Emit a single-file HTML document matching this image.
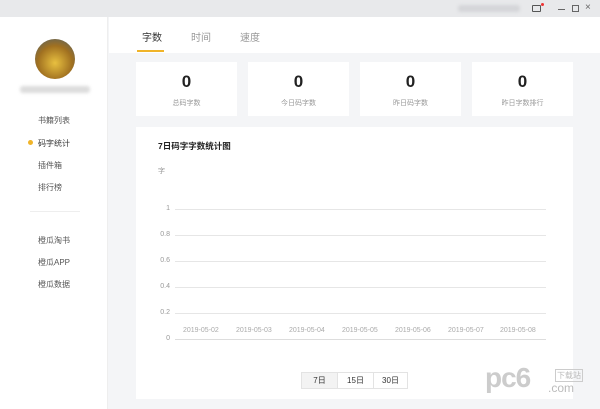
<!DOCTYPE html>
<html><head><meta charset="utf-8"><style>
*{margin:0;padding:0;box-sizing:border-box}
body{width:600px;height:409px;overflow:hidden;background:#f4f5f7;font-family:"Liberation Sans","Noto Sans CJK SC",sans-serif;position:relative;color:#333}
.abs{position:absolute}
.tb{left:0;top:0;width:600px;height:17px;background:#e8e9eb}
.sb{left:0;top:17px;width:108px;height:392px;background:#fff;border-right:1px solid #eee}
.tabs{left:109px;top:17px;width:491px;height:36px;background:#fff}
.tab{top:29px;font-size:10px;color:#999}
.card{background:#fff;text-align:center}
.num{font-size:17px;font-weight:bold;color:#222;margin-top:10px;line-height:20px}
.lab{font-size:7px;color:#999;margin-top:6px}
.nav{font-size:8px;color:#555;left:38px}
.gl{left:175px;width:371px;height:1px;background:#e6e6e6}
.yl{font-size:7px;color:#999;width:20px;text-align:right;left:150px}
.xl{font-size:7px;color:#aaa;top:327px}
</style></head><body>
<div class="abs tb"></div>
<div class="abs" style="left:458px;top:5px;width:62px;height:7px;background:#d4d5d8;border-radius:3px;filter:blur(1.5px)"></div>
<div class="abs" style="left:532px;top:5px;width:9px;height:7px;border:1px solid #555;border-radius:1px"></div>
<div class="abs" style="left:541px;top:3px;width:3px;height:3px;border-radius:50%;background:#e33"></div>
<div class="abs" style="left:558px;top:9px;width:7px;height:1px;background:#666"></div>
<div class="abs" style="left:572px;top:5px;width:7px;height:7px;border:1px solid #666"></div>
<div class="abs" style="left:585px;top:2px;font-size:10px;color:#666">×</div>
<div class="abs sb"></div>
<div class="abs" style="left:35px;top:39px;width:40px;height:40px;border-radius:50%;background:radial-gradient(circle at 50% 60%,#e8c040,#a07020 55%,#4a6070 100%)"></div>
<div class="abs" style="left:20px;top:86px;width:70px;height:7px;background:#dcdcdc;border-radius:3px;filter:blur(1.5px)"></div>
<div class="abs nav" style="top:115px">书籍列表</div>
<div class="abs" style="left:28px;top:140px;width:5px;height:5px;border-radius:50%;background:#f0b429"></div>
<div class="abs nav" style="top:138px;color:#333">码字统计</div>
<div class="abs nav" style="top:160px">插件箱</div>
<div class="abs nav" style="top:182px">排行榜</div>
<div class="abs" style="left:30px;top:211px;width:50px;height:1px;background:#eee"></div>
<div class="abs nav" style="top:235px">橙瓜淘书</div>
<div class="abs nav" style="top:257px">橙瓜APP</div>
<div class="abs nav" style="top:279px">橙瓜数据</div>
<div class="abs tabs"></div>
<div class="abs tab" style="left:142px;color:#333">字数</div>
<div class="abs tab" style="left:191px">时间</div>
<div class="abs tab" style="left:240px">速度</div>
<div class="abs" style="left:137px;top:50px;width:27px;height:2px;background:#f0b429"></div>
<div class="abs card" style="left:136px;top:62px;width:101px;height:54px"><div class="num">0</div><div class="lab">总码字数</div></div>
<div class="abs card" style="left:248px;top:62px;width:101px;height:54px"><div class="num">0</div><div class="lab">今日码字数</div></div>
<div class="abs card" style="left:360px;top:62px;width:101px;height:54px"><div class="num">0</div><div class="lab">昨日码字数</div></div>
<div class="abs card" style="left:472px;top:62px;width:101px;height:54px"><div class="num">0</div><div class="lab">昨日字数排行</div></div>
<div class="abs card" style="left:136px;top:127px;width:437px;height:272px"></div>
<div class="abs" style="left:158px;top:140px;font-size:8.5px;font-weight:bold;color:#222">7日码字字数统计图</div>
<div class="abs" style="left:158px;top:166px;font-size:7px;color:#999">字</div>
<div class="abs gl" style="top:209px"></div><div class="abs yl" style="top:205px">1</div>
<div class="abs gl" style="top:235px"></div><div class="abs yl" style="top:231px">0.8</div>
<div class="abs gl" style="top:261px"></div><div class="abs yl" style="top:257px">0.6</div>
<div class="abs gl" style="top:287px"></div><div class="abs yl" style="top:283px">0.4</div>
<div class="abs gl" style="top:313px"></div><div class="abs yl" style="top:309px">0.2</div>
<div class="abs gl" style="top:339px;background:#ddd"></div><div class="abs yl" style="top:335px">0</div>
<div class="abs xl" style="left:183px">2019-05-02</div>
<div class="abs xl" style="left:236px">2019-05-03</div>
<div class="abs xl" style="left:289px">2019-05-04</div>
<div class="abs xl" style="left:342px">2019-05-05</div>
<div class="abs xl" style="left:395px">2019-05-06</div>
<div class="abs xl" style="left:448px">2019-05-07</div>
<div class="abs xl" style="left:500px">2019-05-08</div>
<div class="abs" style="left:301px;top:372px;width:107px;height:17px;border:1px solid #e3e3e3;display:flex;font-size:8px;color:#333">
<div style="width:35px;text-align:center;line-height:15px;background:#f3f3f3">7日</div>
<div style="width:36px;text-align:center;line-height:15px;border-left:1px solid #e3e3e3">15日</div>
<div style="width:34px;text-align:center;line-height:15px;border-left:1px solid #e3e3e3">30日</div></div>
<div class="abs" style="left:485px;top:362px;font-size:28px;font-weight:bold;color:#ccc;letter-spacing:-1px">pc6</div>
<div class="abs" style="left:555px;top:369px;font-size:8px;color:#bbb;border:1px solid #ccc;padding:0 1px">下载站</div>
<div class="abs" style="left:548px;top:381px;font-size:12px;color:#bbb">.com</div>
</body></html>
